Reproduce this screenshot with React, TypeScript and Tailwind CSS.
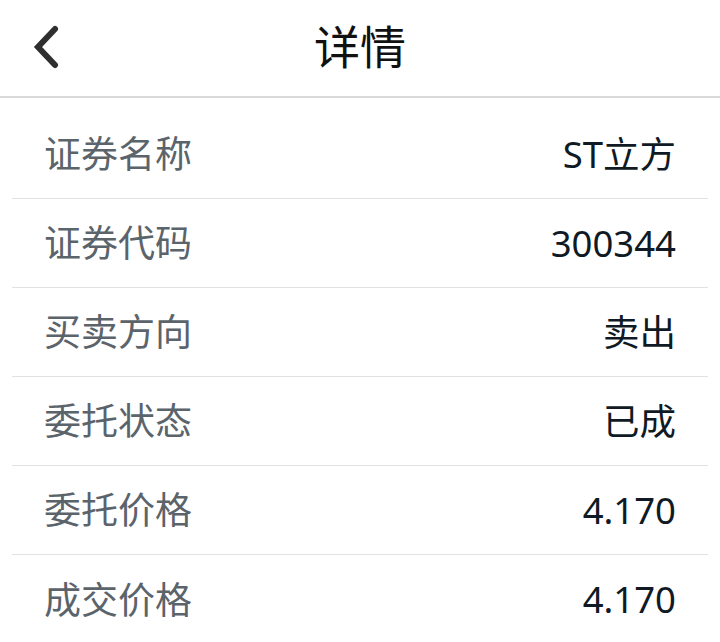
const rows = [
  { label: "证券名称", value: "ST立方" },
  { label: "证券代码", value: "300344" },
  { label: "买卖方向", value: "卖出" },
  { label: "委托状态", value: "已成" },
  { label: "委托价格", value: "4.170" },
  { label: "成交价格", value: "4.170" },
];

export default function App() {
  return (
    <div className="w-[720px] h-[642px] overflow-hidden bg-white font-['Noto_Sans','Noto_Sans_CJK_SC',sans-serif]">
      <div className="relative h-[98px] flex items-center justify-center border-b-2 border-[#dadada]">
        <button className="absolute left-[30px] top-[24px] w-[32px] h-[46px] flex items-center justify-center">
          <svg width="30" height="44" viewBox="0 0 30 44" fill="none">
            <polyline
              points="24,4 7,22 24,40"
              stroke="#2f2f2f"
              strokeWidth="6"
              strokeLinecap="round"
              strokeLinejoin="miter"
            />
          </svg>
        </button>
        <h1 className="text-[46px] leading-none text-[#111] mt-[-4px]">详情</h1>
      </div>
      <div className="mt-[12px] mx-[12px]">
        {rows.map((r, i) => (
          <div
            key={r.label}
            className={
              "h-[89px] flex items-center justify-between px-[32px] " +
              (i < rows.length - 1 ? "border-b border-[#e2e2e2]" : "")
            }
          >
            <span className="text-[37px] text-[#5b636b]">{r.label}</span>
            <span className="text-[36.5px] text-[#0f1a24]">{r.value}</span>
          </div>
        ))}
      </div>
    </div>
  );
}
